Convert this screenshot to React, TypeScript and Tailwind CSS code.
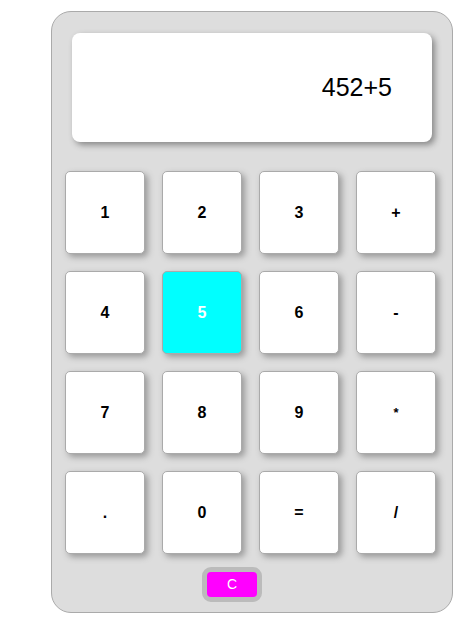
const keys = ["1", "2", "3", "+", "4", "5", "6", "-", "7", "8", "9", "*", ".", "0", "=", "/"];

export default function App() {
  return (
    <div className="min-h-screen bg-white pt-[11px] pl-[51px]" style={{ fontFamily: '"Liberation Sans", Arial, sans-serif' }}>
      <div className="w-[402px] h-[602px] rounded-[20px] border border-[#aaa] bg-[#dddddd]">
        <div className="ml-[20px] mt-[21px] flex h-[109px] w-[360px] items-center justify-end rounded-[8px] bg-white pr-[40px] text-[25px] text-black shadow-[3px_3px_6px_#888]">
          452+5
        </div>
        <div className="ml-[13px] mt-[29px] grid grid-cols-[repeat(4,80px)] gap-x-[17px] gap-y-[17px]">
          {keys.map((k) => (
            <div
              key={k}
              className={`flex h-[83px] items-center justify-center rounded-[5px] border border-[#aaa] font-bold shadow-[3px_3px_6px_#999] ${
                k === "*" ? "text-[13px]" : "text-[16px]"
              } ${k === "5" ? "bg-[#00ffff] text-white" : "bg-white text-black"}`}
            >
              {k}
            </div>
          ))}
        </div>
        <div className="ml-[150px] mt-[13px] flex h-[35px] w-[60px] items-center justify-center rounded-[9px] border-[5px] border-[#bbb] bg-[#ff00ff] text-[14px] text-white">
          C
        </div>
      </div>
    </div>
  );
}
